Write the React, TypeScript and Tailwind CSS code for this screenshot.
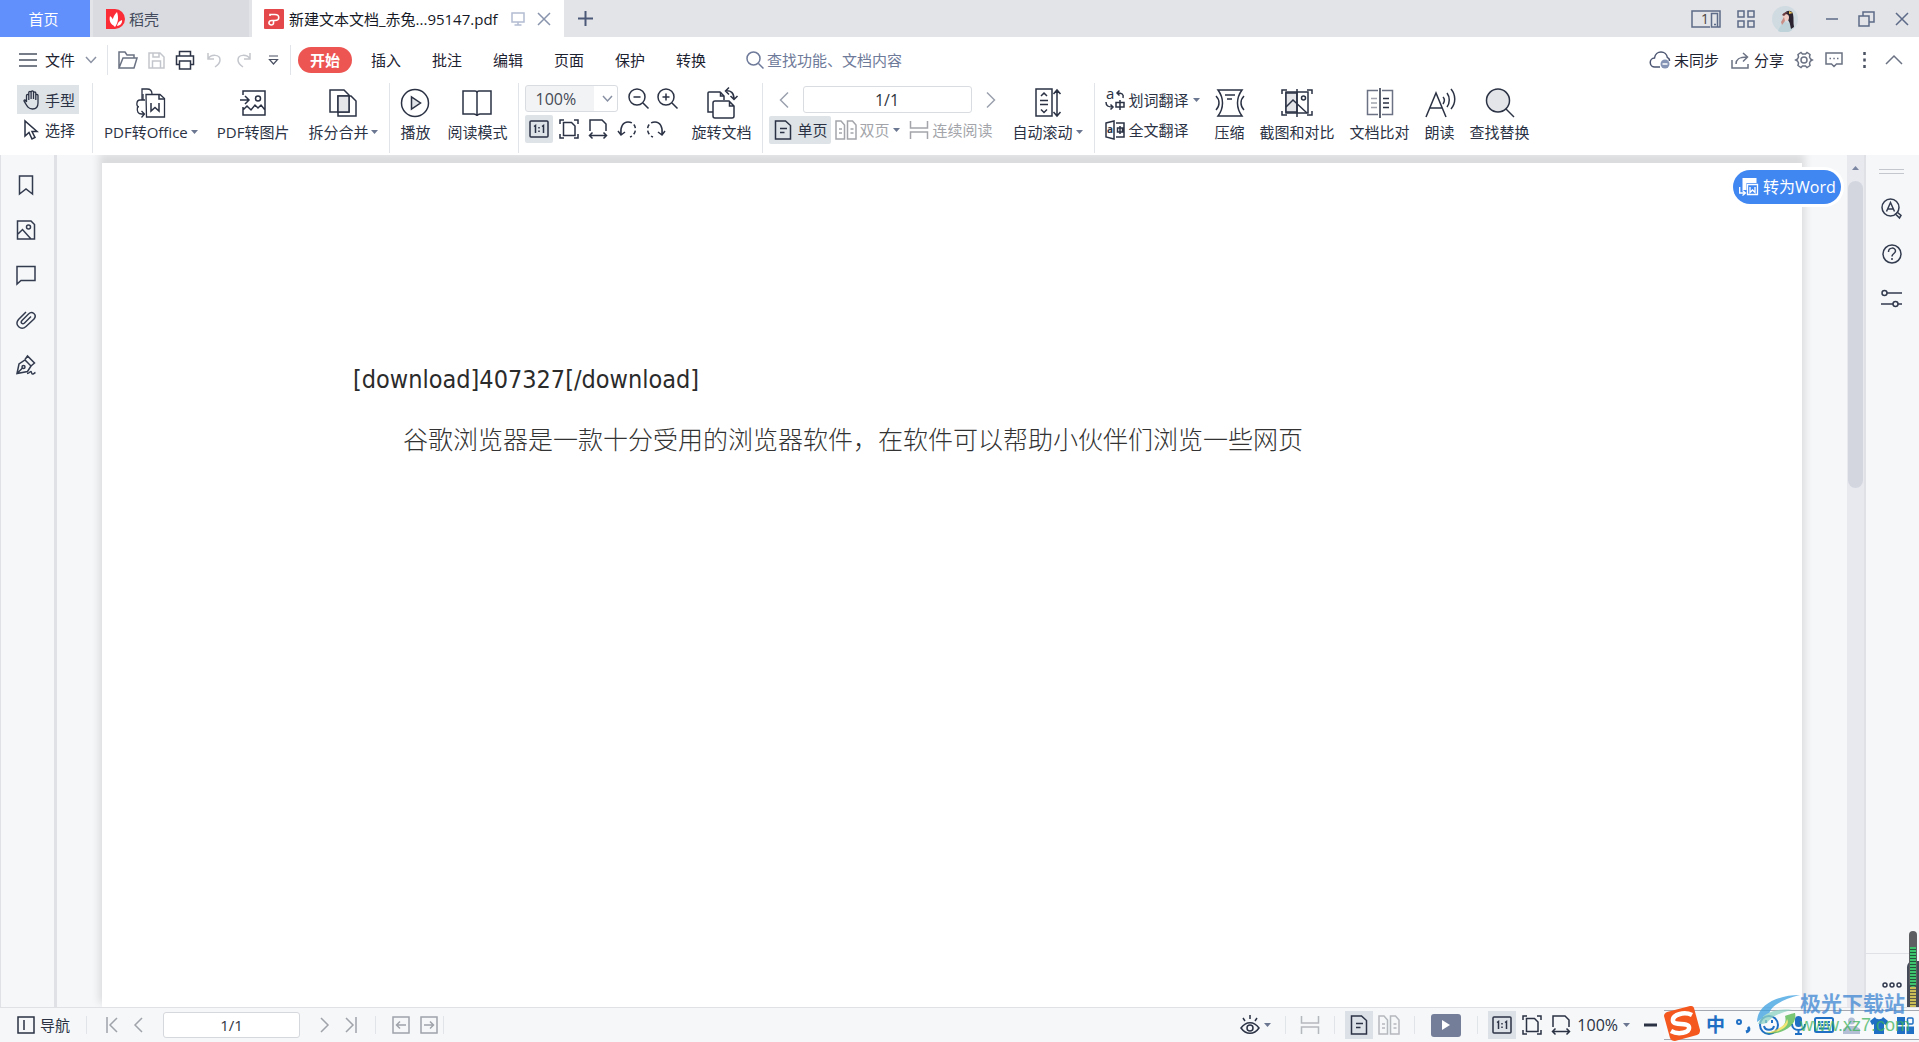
import type { ReactNode } from "react";

type IconProps = {
  w: number;
  h: number;
  children: ReactNode;
  className?: string;
  stroke?: number;
};

function Icon({ w, h, children, className = "", stroke = 1.5 }: IconProps) {
  return (
    <svg
      width={w}
      height={h}
      viewBox={`0 0 ${w} ${h}`}
      fill="none"
      stroke="currentColor"
      strokeWidth={stroke}
      className={`shrink-0 overflow-visible ${className}`}
      aria-hidden="true"
    >
      {children}
    </svg>
  );
}

const Caret = () => (
  <Icon w={7} h={4} className="text-[#6b7690]">
    <path d="M0 0h7L3.500 4z" fill="currentColor" stroke="none" />
  </Icon>
);

const ActualSizeIcon = () => (
  <Icon w={20} h={18}>
    <rect x="1" y="1" width="18" height="16" rx="1" />
    <path d="M5 6.500 6.500 5.500V13M13 6.500l1.500-1V13M10 7v1.500M10 10.500V12" />
  </Icon>
);

const FitPageIcon = () => (
  <Icon w={20} h={20}>
    <path d="M1 5V1h4M15 1h4v4M19 15v4h-4M5 19H1v-4" />
    <path d="M4.500 3.500h8l3.500 3.500v9.500H4.500z" />
  </Icon>
);

const FitWidthIcon = () => (
  <Icon w={20} h={20}>
    <path d="M2 12V1h12l4 4v7M2 16.500h16M4.500 13.500l-3 3 3 3M15.500 13.500l3 3-3 3" />
  </Icon>
);

const SinglePageIcon = () => (
  <Icon w={18} h={20}>
    <path d="M1.500 1h10l5 4.500V19h-15zM6 8.500h7M6 12.500h4.500" />
  </Icon>
);

const DoublePageIcon = () => (
  <Icon w={22} h={20}>
    <path d="M1 1h5l3.500 4v14H1zM12.500 1h5L21 5v14h-8.500zM4 9h3M4 13h3M15.500 9h3M15.500 13h3" />
  </Icon>
);

const ContinuousIcon = () => (
  <Icon w={20} h={20}>
    <path d="M1.500 1v7h17V1M1.500 19v-7h17v7" />
  </Icon>
);

const Chevron = ({ dir }: { dir: "left" | "right" }) => (
  <Icon w={10} h={18}>
    <path d={dir === "left" ? "M9 1.500 1.500 9 9 16.500" : "M1 1.500 8.500 9 1 16.500"} />
  </Icon>
);

const Divider = ({ className = "h-[30px]" }: { className?: string }) => (
  <div className={`w-px shrink-0 bg-[#e1e4e8] ${className}`} />
);

function Tool({ icon, label, caret }: { icon: ReactNode; label: string; caret?: boolean }) {
  return (
    <button className="flex flex-col items-center whitespace-nowrap">
      <span className="flex h-[37px] items-center justify-center pt-[3px]">{icon}</span>
      <span className="flex items-center gap-[3px] leading-6">
        {label}
        {caret && <Caret />}
      </span>
    </button>
  );
}

function TitleBar() {
  return (
    <header className="flex h-[37px] shrink-0 items-stretch bg-[#e2e4e8]">
      <button className="w-[90px] bg-[#618ffc] pr-[3px] text-white">首页</button>
      <button className="ml-[3px] flex w-[156px] items-center gap-1 bg-[#d9dbe0] pl-[13px] text-[#444b5c]">
        <svg width="19" height="20" viewBox="0 0 19 20" aria-hidden="true">
          <path d="M0 0h9a10 10 0 0 1 0 20H0z" fill="#fb2c36" />
          <path
            d="M9 18C5 15 6 8 11 3c2 6 1 11-2 15zM7.500 16.500C4 14.500 3 11 4 7c3 2 4 5 3.500 9.500zM11 17c.500-3 2-5 5-6 .500 3-1.500 5.500-5 6z"
            fill="#fff"
          />
        </svg>
        稻壳
      </button>
      <div className="ml-[3px] flex w-[312px] items-center bg-white pl-3 text-[#151926]">
        <svg width="20" height="20" viewBox="0 0 20 20" aria-hidden="true">
          <rect width="20" height="20" rx="1" fill="#e5484a" />
          <path
            d="M6 7V5.500h5c5 0 5 6 0 6H8c-4 0-4 4.500-.500 4.500 2.500 0 2-2 2-4.500"
            fill="none"
            stroke="#fff"
            strokeWidth="1.600"
          />
        </svg>
        <span className="ml-[5px] flex-1 whitespace-nowrap">新建文本文档_赤兔...95147.pdf</span>
        <Icon w={14} h={14} className="text-[#b3bdd2]">
          <path d="M1 1h12v9H1zM7 10v3M3.500 13h7" />
        </Icon>
        <button aria-label="关闭标签" className="mr-[13px] ml-3">
          <Icon w={14} h={14} className="text-[#8893ac]">
            <path d="M1 1l12 12M13 1 1 13" />
          </Icon>
        </button>
      </div>
      <button aria-label="新建标签" className="ml-[14px]">
        <Icon w={15} h={15} className="text-[#4c5877]" stroke={2}>
          <path d="M7.500 0v15M0 7.500h15" />
        </Icon>
      </button>

      <div className="ml-auto flex items-center pr-[10px] text-[#5d6b88]">
        <button aria-label="窗口列表" className="mr-4">
          <Icon w={30} h={18}>
            <path d="M19 17H1V1h28v16h-2" />
            <path d="M20.500 3.500h6V17h-6zM23 14.500h2" />
            <text x="10" y="14" fontSize="14" fill="#4c4540" stroke="none">1</text>
          </Icon>
        </button>
        <button aria-label="应用" className="mr-[17px]">
          <Icon w={18} h={18}>
            <path d="M1 1h6v6H1zM11 1h6v6h-6zM1 11h6v6H1zM11 11h6v6h-6z" />
          </Icon>
        </button>
        <svg width="26" height="26" viewBox="0 0 26 26" aria-hidden="true">
          <circle cx="13" cy="13" r="13" fill="#cfdbe1" />
          <path d="M6 25c2-5 4-8 7-9l6 2 1 6a13 13 0 0 1-14 1z" fill="#bdd2d9" />
          <path d="M13 7c2-3 7-3 8 1 1 4 0 9 1 13l-3 2c-1-5-1-6-3-9-2 0-4-2-3-7z" fill="#2b2430" />
          <path d="M11 9c2-2 6-1 6 2s-1 4-3 4-4-3-3-6z" fill="#f0cfc7" />
          <path d="M9 16l3-5 1 4-3 4z" fill="#c98f86" />
          <path d="M10 9c2-3 4-3 6-3l-4 4z" fill="#6b3f42" />
          <path d="M17 5l4 2-4 1z" fill="#e5bf58" />
        </svg>
        <Divider className="mx-3 h-6 bg-[#c9ccd3]" />
        <button aria-label="最小化" className="ml-[3px]">
          <Icon w={12} h={14}>
            <path d="M0 7h12" />
          </Icon>
        </button>
        <button aria-label="还原" className="ml-5">
          <Icon w={17} h={16}>
            <path d="M1 5h10v10H1zM5 5V1h11v10h-5" />
          </Icon>
        </button>
        <button aria-label="关闭" className="ml-5">
          <Icon w={14} h={14}>
            <path d="M1 1l12 12M13 1 1 13" />
          </Icon>
        </button>
      </div>
    </header>
  );
}

const menus = ["插入", "批注", "编辑", "页面", "保护", "转换"];

function MenuBar() {
  return (
    <nav className="flex h-[46px] shrink-0 items-center bg-white pr-4 pl-[19px] text-[#1d2231]">
      <button className="flex items-center">
        <Icon w={18} h={14} className="mr-2 text-[#4a5162]">
          <path d="M0 1h18M0 7h18M0 13h18" />
        </Icon>
        文件
        <Icon w={12} h={8} className="mx-[10px] text-[#8b92a3]">
          <path d="M1 1l5 5.500L11 1" />
        </Icon>
      </button>
      <Divider />
      <div className="flex items-center gap-[10px] px-[10px] text-[#6b7283]">
        <button aria-label="打开">
          <Icon w={20} h={18}>
            <path d="M1 17V1h6l2 3h7v3M1 17 5 7h14l-3 10z" />
          </Icon>
        </button>
        <button aria-label="保存" className="text-[#c3c6cc]">
          <Icon w={17} h={17}>
            <path d="M1 1h11l4 4v11H1zM5 1v4h6V1M4.500 16V9h8v7" />
          </Icon>
        </button>
        <button aria-label="打印" className="text-[#2c3446]">
          <Icon w={20} h={20}>
            <path d="M4.500 6V1.500h11V6M4.500 14.500H1.500V6h17v8.500h-3M4.500 11h11v8h-11z" />
          </Icon>
        </button>
        <button aria-label="撤销" className="text-[#c3c6cc]">
          <Icon w={18} h={16}>
            <path d="M3 1v6h6M3 7c3-5 12-5 12 1 0 3-2 5-5 7" />
          </Icon>
        </button>
        <button aria-label="恢复" className="text-[#c3c6cc]">
          <Icon w={20} h={16}>
            <path d="M17 1v6h-6M17 7C14 2 5 2 5 8c0 3 2 5 5 7" />
          </Icon>
        </button>
        <button aria-label="自定义快速访问工具栏" className="pr-px pl-[5px] text-[#4a5162]">
          <Icon w={11} h={10}>
            <path d="M1 1h9M1.500 4.500h8L5.500 9z" strokeWidth="1.200" />
          </Icon>
        </button>
      </div>
      <Divider />
      <button className="ml-[7px] h-[26px] w-[54px] rounded-full bg-[#ec5552] font-bold text-white">
        开始
      </button>
      <div className="ml-[19px] flex gap-[31px]">
        {menus.map((menu) => (
          <button key={menu}>{menu}</button>
        ))}
      </div>
      <label className="ml-10 flex items-center gap-[3px] text-[#6e7a99]">
        <Icon w={18} h={18}>
          <circle cx="7.500" cy="7.500" r="6.500" />
          <path d="M12.500 12.500 17.500 17.500" />
        </Icon>
        <input
          aria-label="搜索"
          placeholder="查找功能、文档内容"
          className="w-40 outline-none placeholder:text-[#6e7a99]"
        />
      </label>
      <div className="ml-auto flex items-center text-[#3d4659]">
        <button className="flex items-center gap-1 text-[#1d2231]">
          <Icon w={20} h={18} className="text-[#4a5470]">
            <path d="M10 16H5a4.500 4.500 0 0 1-.500-9C5 3 8 1 11 1s6 2 6.500 6" />
            <path d="M17.500 7c1.500 0 2 1.500 2 3" />
            <circle cx="15" cy="13" r="4.500" fill="#8593b5" stroke="none" />
            <path d="M12.500 13h5" stroke="#fff" />
          </Icon>
          未同步
        </button>
        <button className="ml-3 flex items-center gap-[5px] text-[#1d2231]">
          <Icon w={18} h={17} className="text-[#6b7283]">
            <path d="M1 8v8h16v-4M5 12c0-5 3-7 11-7M12 1l4.500 4-4.500 4.500" />
          </Icon>
          分享
        </button>
        <button aria-label="设置" className="ml-[11px]">
          <Icon w={18} h={18} className="text-[#6b7283]">
            <path d="M6 1.500 7.500 3h3L12 1.500l3 2-.500 2.500 1 2L17.300 9l-1.800 1-1 2 .500 2.500-3 2-1.500-1.500h-3L6 16.500l-3-2 .500-2.500-1-2L.700 9l1.800-1 1-2L3 3.500z" />
            <circle cx="9" cy="9" r="3" />
          </Icon>
        </button>
        <button aria-label="反馈" className="ml-3">
          <Icon w={18} h={16} className="text-[#6b7283]">
            <path d="M1 1h16v11h-5.500L9 14.500 6.500 12H1zM4.500 6.500h1.500M8.300 6.500h1.500M12 6.500h1.500" />
          </Icon>
        </button>
        <button aria-label="更多" className="ml-5">
          <Icon w={3} h={16}>
            <path d="M1.500 0v3M1.500 6.500v3M1.500 13v3" stroke="#4a5162" strokeWidth="2.500" />
          </Icon>
        </button>
        <button aria-label="收起功能区" className="ml-[19px]">
          <Icon w={18} h={10} className="text-[#6b7283]">
            <path d="M1 9 9 1l8 8" />
          </Icon>
        </button>
      </div>
    </nav>
  );
}

function Ribbon() {
  return (
    <section className="relative z-10 flex h-[72px] shrink-0 bg-white pl-[17px] text-[#2b3244]">
      <div className="flex w-[75px] flex-col items-start pt-[2px]">
        <button className="flex h-[29px] w-[62px] items-center gap-[6px] bg-[#dee3e8] pl-[6px]">
          <Icon w={16} h={20} stroke={1.3}>
            <path d="M3.500 12V5.500c0-1.500 2.300-1.500 2.300 0V10 2.500c0-1.500 2.300-1.500 2.300 0V9 2c0-1.500 2.400-1.500 2.400 0v7V3c0-1.500 2.300-1.500 2.300 0v7V5.500c0-1.500 2.200-1.500 2.200 0V13c0 4-2 6-5.500 6-4 0-5-2-8.500-8 0-1.500 1.500-1.500 2.500 1z" />
          </Icon>
          手型
        </button>
        <button className="flex h-[31px] w-[62px] items-center gap-[6px] pl-[6px]">
          <Icon w={16} h={20}>
            <path d="M2 1v15l4-3.500 3 6.500 3-1.500-3-6h5z" />
          </Icon>
          选择
        </button>
      </div>
      <Divider className="h-[70px]" />

      <div className="flex gap-[19px] px-[11px]">
        <Tool
          label="PDF转Office"
          caret
          icon={
            <Icon w={30} h={30}>
              <path d="M6 12V1h5c4 0 5 2 5 5M9 12H4c-4 0-4 7-1 7M10 6.500h14l4.500 4V29h-18z" strokeWidth="1.300" />
              <path d="M7 6v6M1.500 19c-1 5 1 7 4 7h3M5.500 23l3 3-3 3.500" strokeWidth="1.300" />
              <path d="M15 15v8l4-3.500 4 3.500v-8M23 7v4h5" />
            </Icon>
          }
        />
        <Tool
          label="PDF转图片"
          icon={
            <Icon w={26} h={28}>
              <path d="M3 6V2h22v24H3v-8M0 11h8M5 7l4 4-4 4M3 21l4-4 4 4 4-5 3 3 3-3 4 5" />
              <circle cx="18" cy="9.500" r="2.500" />
            </Icon>
          }
        />
        <Tool
          label="拆分合并"
          caret
          icon={
            <Icon w={30} h={30}>
              <path d="M2 2h14l5 5v17H2z" />
              <path d="M10 8h13l5 5v15H10z" />
              <path d="M10 8h11v16H10z" fill="#e3e5e9" />
            </Icon>
          }
        />
      </div>
      <Divider className="h-[70px]" />

      <div className="flex gap-[17px] px-[10px]">
        <Tool
          label="播放"
          icon={
            <Icon w={30} h={30}>
              <circle cx="15" cy="15" r="13.500" />
              <path d="M11.500 9v12l9-6z" fill="#dfe2e6" />
            </Icon>
          }
        />
        <Tool
          label="阅读模式"
          icon={
            <Icon w={30} h={28}>
              <path d="M15 4c0-1 1-2 2-2h12v23H18c-1 0-3 1-3 2 0-1-2-2-3-2H1V2h12c1 0 2 1 2 2zM15 4v22" />
            </Icon>
          }
        />
      </div>
      <Divider className="h-[70px]" />

      <div className="flex gap-[6px] px-[6px]">
        <div className="flex flex-col gap-[3px] pt-[2px]">
          <div className="flex items-center">
            <div className="relative">
              <select
                aria-label="缩放比例"
                className="block h-[27px] w-[93px] appearance-none rounded-[3px] border border-[#d9dce1] bg-white bg-linear-to-r from-[#f2f3f5] from-75% to-white to-75% pl-[10px] text-[16px] text-[#454a55]"
              >
                <option>100%</option>
              </select>
              <Icon w={11} h={8} className="pointer-events-none absolute top-[10px] right-[5px] text-[#8790a3]">
                <path d="M1 1l4.500 5L10 1" />
              </Icon>
            </div>
            <button aria-label="缩小" className="ml-[10px]">
              <Icon w={21} h={21}>
                <circle cx="9" cy="9" r="8" />
                <path d="M15 15l5.500 5.500M5.500 9h7" />
              </Icon>
            </button>
            <button aria-label="放大" className="ml-2">
              <Icon w={21} h={21}>
                <circle cx="9" cy="9" r="8" />
                <path d="M15 15l5.500 5.500M5.500 9h7M9 5.500v7" />
              </Icon>
            </button>
          </div>
          <div className="flex items-center gap-[9px]">
            <button aria-label="实际大小" className="-mr-[3px] flex h-7 w-7 items-center justify-center rounded-xs bg-[#dee3e8]">
              <ActualSizeIcon />
            </button>
            <button aria-label="适合页面">
              <FitPageIcon />
            </button>
            <button aria-label="适合宽度">
              <FitWidthIcon />
            </button>
            <button aria-label="向左旋转">
              <Icon w={20} h={18}>
                <path d="M4 14C3 7 6 2 11 2M1 11l3 4 4-3" />
                <path d="M11 2c9 0 10 12 2 15" strokeDasharray="4 2.500" />
              </Icon>
            </button>
            <button aria-label="向右旋转">
              <Icon w={20} h={18}>
                <path d="M16 14c1-7-2-12-7-12M19 11l-3 4-4-3" />
                <path d="M9 2C0 2-1 14 7 17" strokeDasharray="4 2.500" />
              </Icon>
            </button>
          </div>
        </div>
        <div className="pr-1 pl-2">
          <Tool
            label="旋转文档"
            icon={
              <Icon w={30} h={32}>
                <path d="M6 25H1V6c0-1 0-1 1-1h11l4 4v4" />
                <path d="M6 16c0-2 1-2 2-2h14l5 5v10c0 2-1 2-2 2H8c-1 0-2 0-2-2zM22.500 14v5H27M13.500 5v4H17" />
                <path d="M18 4c6-1 9 2 9 8M22 .500 18.500 4 22 7.500M23.500 9l3.500 3.500L30.500 9" />
              </Icon>
            }
          />
        </div>
      </div>
      <Divider className="h-[70px]" />

      <div className="flex flex-col gap-[3px] px-[6px] pt-[3px]">
        <div className="flex h-[27px] items-center gap-[14px] pl-[10px] text-[#9ba1ae]">
          <button aria-label="上一页">
            <Chevron dir="left" />
          </button>
          <input
            aria-label="页码"
            defaultValue="1/1"
            className="h-[27px] w-[169px] rounded-[3px] border border-[#d9dce1] text-center text-[16px] text-[#2f3440]"
          />
          <button aria-label="下一页">
            <Chevron dir="right" />
          </button>
        </div>
        <div className="flex items-center">
          <button className="flex h-7 w-[62px] items-center gap-[6px] rounded-xs bg-[#dee3e8] pl-[5px]">
            <SinglePageIcon />
            单页
          </button>
          <button className="ml-1 flex items-center gap-[3px] text-[#a3a5aa]">
            <DoublePageIcon />
            双页
            <Caret />
          </button>
          <button className="ml-[9px] flex items-center gap-1 text-[#a3a5aa]">
            <ContinuousIcon />
            连续阅读
          </button>
        </div>
      </div>
      <div className="flex px-[11px]">
        <Tool
          label="自动滚动"
          caret
          icon={
            <Icon w={26} h={30}>
              <path d="M1 1h16v27H1zM6 8l3-3 3 3M5 12.500h8M5 16.500h8M6 21.500l3 3 3-3M22 3v24M18.500 6 22 2l3.500 4M18.500 24l3.500 4 3.500-4" />
            </Icon>
          }
        />
      </div>
      <Divider className="h-[70px]" />

      <div className="flex gap-[15px] pl-[10px]">
        <div className="flex flex-col items-start pt-[2px]">
          <button className="flex h-[29px] items-center gap-1">
            <Icon w={20} h={20}>
              <text x="1" y="9" fontSize="15" fill="currentColor" stroke="none">a</text>
              <path d="M18 8c1-4-1-5-6-5M14.500.500 12 3l2.500 2.500M1 12c0 4 2 5 7 5M5.500 14.500 8 17l-2.500 2.500M11 12.500h8v4.500h-8zM15 10v10" />
            </Icon>
            划词翻译
            <Caret />
          </button>
          <button className="flex h-[31px] items-center gap-1">
            <Icon w={20} h={20}>
              <path d="M1 3l8-2v18l-8-2zM11 3h8v14h-8M12.500 8h5v4h-5zM15 6v8" />
              <text x="2" y="13" fontSize="10" fontWeight="700" fill="currentColor" stroke="none">a</text>
            </Icon>
            全文翻译
          </button>
        </div>
        <Tool
          label="压缩"
          icon={
            <Icon w={30} h={28}>
              <path d="M3 1h24c-6 8-6 18 0 26H3c6-8 6-18 0-26zM1 7c4 4 4 10 0 14M29 7c-4 4-4 10 0 14M10 6h10M12 10h5" />
            </Icon>
          }
        />
        <Tool
          label="截图和对比"
          icon={
            <Icon w={32} h={30}>
              <path d="M5 4h22v21H5z" />
              <path d="M5 5h11v19H5z" fill="#e3e5e9" />
              <path d="M1 6V2h5M26 2h5v4M31 23v4h-5M6 27H1v-4M16 1v28M5 19l7-7 14 13" />
              <circle cx="22.500" cy="10" r="2" />
            </Icon>
          }
        />
        <Tool
          label="文档比对"
          icon={
            <Icon w={28} h={32}>
              <path d="M12 3.500H1.500v24H12M16 3.500h10.500v24H16" stroke="#6b7283" />
              <path d="M14 1v30M17 11.500h6M17 16h6M17 20.500h6" />
              <path d="M5 11.500h6M5 16h6M5 20.500h6" stroke="#a3a5b0" />
            </Icon>
          }
        />
        <Tool
          label="朗读"
          icon={
            <Icon w={30} h={30}>
              <path d="M1 29 11 5l10 24M5 20h12M18 9c2 2 2 4 0 7M22 5c3 4 3 10 0 14M26 1c5 6 5 14 0 20" />
            </Icon>
          }
        />
        <Tool
          label="查找替换"
          icon={
            <Icon w={30} h={30}>
              <circle cx="13" cy="12.500" r="11.500" fill="#e3e5e9" />
              <path d="M21 21l8 8" />
            </Icon>
          }
        />
      </div>
    </section>
  );
}

function LeftPanel() {
  return (
    <aside className="flex w-[57px] shrink-0 flex-col items-center gap-[25px] border-r-[3px] border-l border-[#dfe1e7] bg-[#f5f7f9] pt-5 pr-[3px] text-[#333b4f]">
      <button aria-label="书签">
        <Icon w={20} h={20}>
          <path d="M3.500 1h13v18L10 14l-6.500 5z" />
        </Icon>
      </button>
      <button aria-label="缩略图">
        <Icon w={20} h={20}>
          <path d="M1.500 1H15l3.500 3.500V19h-17zM2 14l4.500-4.500L15 19" />
          <circle cx="12.500" cy="7" r="2" />
        </Icon>
      </button>
      <button aria-label="批注">
        <Icon w={20} h={20}>
          <path d="M1 1.500h18v14H5L1 19z" />
        </Icon>
      </button>
      <button aria-label="附件">
        <Icon w={20} h={20}>
          <path d="M15 6.500 8.500 13c-2 2-4.500-.500-2.500-2.500L12.500 4c3.500-3.500 9 .500 5.500 5L10 16.500C5 21-2 15 2.500 9.500L10 2" />
        </Icon>
      </button>
      <button aria-label="签名">
        <Icon w={20} h={20}>
          <path d="M1 18.500 3 9l6-4 6 6-3.500 5.500zM9 4.500 11.500 1l7 7-3.500 3M1 18.500l5.500-5.500M11 18.500c3 0 4-4 4.500-1s2 1 4 0" />
          <circle cx="7.500" cy="12" r="1.500" />
        </Icon>
      </button>
    </aside>
  );
}

function RightPanel() {
  return (
    <aside className="flex w-[55px] shrink-0 flex-col items-center border-l-2 border-[#dfe1e7] bg-[#f5f7f9] pt-[14px] pr-[2px] text-[#333b4f]">
      <div className="h-[5px] w-[25px] border-y border-[#c4c7cd]" />
      <div className="mt-6 flex flex-1 flex-col items-center gap-[25px]">
        <button aria-label="查找">
          <Icon w={21} h={21}>
            <circle cx="9.500" cy="9.500" r="8.500" />
            <path d="M5.500 13.500 9.500 4.500l4 9M7 11h5" />
            <path d="M14.500 16l2-1.500 3.500 3-1.500 2.500z" fill="#f5f7f9" />
          </Icon>
        </button>
        <button aria-label="帮助">
          <Icon w={20} h={20}>
            <circle cx="10" cy="10" r="9" />
            <path d="M6.500 8c0-5 7-5 7-1 0 2.500-3.500 2.500-3.500 5.500M10 14v2" />
          </Icon>
        </button>
        <button aria-label="属性设置">
          <Icon w={21} h={20}>
            <circle cx="3.500" cy="4" r="2.500" />
            <circle cx="14.500" cy="15" r="2.500" />
            <path d="M6 4h15M0 15h12M17 15h4" />
          </Icon>
        </button>
      </div>
      <div className="flex h-[54px] w-full justify-center border-t border-[#dfe1e7] pt-7">
        <Icon w={20} h={6}>
          <circle cx="3" cy="3" r="2" />
          <circle cx="10" cy="3" r="2" />
          <circle cx="17" cy="3" r="2" />
        </Icon>
      </div>
    </aside>
  );
}

function Workspace() {
  return (
    <main className="relative flex min-h-0 flex-1 bg-[#f5f7f9]">
      <LeftPanel />
      <div className="flex min-w-0 flex-1 overflow-hidden px-[45px] pt-2">
        <article className="flex-1 bg-white pt-[200px] pl-[251px] shadow-[0_-7px_8px_3px_rgba(0,0,0,0.11)]">
          <p className="font-['DejaVu_Sans_Condensed','Noto_Sans',sans-serif] text-[25px] leading-[34px] text-[#2b2b2b]">
            [download]407327[/download]
          </p>
          <p className="mt-[25px] pl-[50px] text-[25px] leading-[34px] font-light text-[#333]">
            谷歌浏览器是一款十分受用的浏览器软件，在软件可以帮助小伙伴们浏览一些网页
          </p>
        </article>
      </div>
      <div className="flex w-[17px] shrink-0 flex-col items-center bg-[#e8e9ef]">
        <Icon w={7} h={4} className="my-[11px] text-[#7b86a3]">
          <path d="M0 4h7L3.500 0z" fill="currentColor" stroke="none" />
        </Icon>
        <div className="h-[36%] w-[15px] rounded-full bg-[#d3d6df]" />
      </div>
      <RightPanel />

      <button className="absolute top-[15px] right-[78px] flex h-[34px] w-[108px] items-center gap-[5px] rounded-full bg-[#4187f2] pl-[6px] text-[16px] whitespace-nowrap text-white shadow-[0_0_0_3px_#fff]">
        <Icon w={19} h={18}>
          <path d="M3.500 0h14v5h-10v7h-4z" fill="#fff" stroke="none" />
          <path d="M8.500 6.500h10v10h-10z" strokeWidth="1.300" />
          <path d="M11 9v5.500l2.500-2.500 2.500 2.500V9M.700 9v6h5.500M3.500 12.500l3 2.500-3 2.500" strokeWidth="1.300" />
        </Icon>
        转为Word
      </button>
      <LevelMeter />
    </main>
  );
}

function LevelMeter() {
  return (
    <div className="absolute right-0 bottom-0 flex h-[76px] w-3 flex-col items-center">
      <div className="absolute bottom-0 h-[46px] w-3 rounded-tl-md bg-[#464b59]" />
      <div className="relative z-10 flex h-14 w-2 flex-col rounded-full bg-[#5c5e62] px-px pt-4">
        <div className="h-10 rounded-b-full bg-[repeating-linear-gradient(#3ec46d_0_2px,#23533a_2px_3px)]" />
      </div>
      <div className="relative h-5 w-[6px] bg-[repeating-linear-gradient(#c9bd58_0_2px,#5d5c45_2px_3px)]" />
    </div>
  );
}

function StatusBar() {
  return (
    <footer className="flex h-[35px] shrink-0 items-center border-t border-[#dfe1e5] bg-[#f5f7f9] pl-[17px] text-[#2b3244]">
      <button className="flex items-center gap-[5px]">
        <Icon w={18} h={18}>
          <path d="M1 1h16v16H1zM7 4v10" />
        </Icon>
        导航
      </button>
      <Divider className="mx-4 h-[18px]" />
      <div className="flex items-center text-[#a0a3aa]">
        <button aria-label="第一页" className="ml-[3px]">
          <Icon w={12} h={16}>
            <path d="M1 0v16M11 1 4 8l7 7" />
          </Icon>
        </button>
        <button aria-label="上一页" className="ml-4">
          <Icon w={9} h={16}>
            <path d="M8 1 1 8l7 7" />
          </Icon>
        </button>
        <input
          aria-label="当前页码"
          defaultValue="1/1"
          className="mx-5 h-[26px] w-[137px] rounded-[3px] border border-[#d5d8dd] bg-white text-center text-[#2f3440]"
        />
        <button aria-label="下一页">
          <Icon w={9} h={16}>
            <path d="M1 1l7 7-7 7" />
          </Icon>
        </button>
        <button aria-label="最后一页" className="ml-4">
          <Icon w={12} h={16}>
            <path d="M11 0v16M1 1l7 7-7 7" />
          </Icon>
        </button>
        <Divider className="ml-[18px] h-[18px]" />
        <button aria-label="后退" className="ml-4">
          <Icon w={18} h={18}>
            <path d="M1 1h16v16H1zM4 9h10M8 5.500 4.500 9 8 12.500" />
          </Icon>
        </button>
        <button aria-label="前进" className="ml-[10px]">
          <Icon w={18} h={18}>
            <path d="M1 1h16v16H1zM4 9h10M10 5.500l3.500 3.500-3.500 3.500" />
          </Icon>
        </button>
        <Divider className="ml-[5px] h-[18px]" />
      </div>

      <div className="ml-auto flex items-center">
        <button aria-label="护眼模式" className="flex items-center gap-1">
          <Icon w={20} h={20}>
            <path d="M1 13c5-7 13-7 18 0-5 7-13 7-18 0zM10 0v4M3 3l2 3M17 3l-2 3" />
            <circle cx="10" cy="13" r="3" />
          </Icon>
          <Caret />
        </button>
        <Divider className="mx-[14px] h-[18px]" />
        <button aria-label="连续阅读" className="text-[#b5b8bd]">
          <ContinuousIcon />
        </button>
        <Divider className="mr-[10px] ml-[14px] h-[18px]" />
        <button aria-label="单页" className="flex h-7 w-7 items-center justify-center bg-[#dce0e7]">
          <SinglePageIcon />
        </button>
        <button aria-label="双页" className="ml-[5px] text-[#b5b8bd]">
          <DoublePageIcon />
        </button>
        <Divider className="mr-4 ml-[14px] h-[18px]" />
        <button aria-label="播放" className="flex h-[23px] w-[30px] items-center justify-center rounded-[3px] bg-[#747e98]">
          <Icon w={8} h={10}>
            <path d="M0 0v10l8-5z" fill="#fff" stroke="none" />
          </Icon>
        </button>
        <Divider className="mr-[10px] ml-4 h-[18px]" />
        <button aria-label="实际大小" className="flex h-7 w-7 items-center justify-center bg-[#dce0e7]">
          <ActualSizeIcon />
        </button>
        <button aria-label="适合页面" className="ml-[6px]">
          <FitPageIcon />
        </button>
        <button aria-label="适合宽度" className="ml-[9px]">
          <FitWidthIcon />
        </button>
        <button className="ml-[6px] flex items-center gap-[5px] text-[16px]">
          100%
          <Caret />
        </button>
        <button aria-label="缩小" className="mr-[7px] ml-[14px]">
          <Icon w={13} h={4} stroke={3}>
            <path d="M0 2h13" />
          </Icon>
        </button>
        <InputMethodBar />
      </div>
    </footer>
  );
}

function InputMethodBar() {
  return (
    <div className="relative flex h-[30px] w-[255px] items-center border-y border-[#a4a8b0] bg-[#f7f9fb] pl-[42px] text-[#1f6fc4]">
      <svg width="36" height="35" viewBox="0 0 36 35" className="absolute top-[-5px] left-0" aria-hidden="true">
        <path d="M3 6 26 0c2 0 3 0 4 2l6 22c0 3-1 4-3 5l-22 6c-3 0-4-1-5-3L0 10c0-2 1-3 3-4z" fill="#f4581f" />
        <path
          d="M28 9C20 5 8 9 9 15c1 5 15 1 16 6 1 6-11 8-18 4"
          fill="none"
          stroke="#fff"
          strokeWidth="4.500"
        />
      </svg>
      <span className="w-[30px] text-[19px] font-bold">中</span>
      <Icon w={15} h={16} stroke={2}>
        <circle cx="3" cy="5" r="2" />
        <path d="M12 10c2 2 1 4-2 5" strokeWidth="3" />
      </Icon>
      <Icon w={20} h={20} stroke={2} className="ml-2">
        <circle cx="10" cy="10" r="9" />
        <path d="M5 11c1 5 9 5 10 0M7 5v3M13 5v3" />
      </Icon>
      <Icon w={15} h={19} stroke={2} className="ml-3">
        <rect x="4" y="0" width="7" height="11" rx="3.500" fill="currentColor" stroke="none" />
        <path d="M1 8c0 8 13 8 13 0M7.500 14v4M4 18h7" />
      </Icon>
      <Icon w={20} h={16} stroke={2} className="ml-2">
        <rect x="1" y="1" width="18" height="14" rx="1.500" />
        <path d="M4 5h12M4 8h12" strokeDasharray="2 1.300" />
        <path d="M5 11.500h10" />
      </Icon>
      <Icon w={17} h={17} className="ml-[9px] text-[#b4bfd6]">
        <circle cx="8.500" cy="4" r="3.500" fill="currentColor" stroke="none" />
        <path d="M0 17v-5l4-3h9l4 3v5z" fill="currentColor" stroke="none" />
      </Icon>
      <Icon w={18} h={17} className="ml-[10px]">
        <path d="M5 0c1 3 7 3 8 0l5 4-2 4-2-1v10H4V7L2 8 0 4z" fill="currentColor" stroke="none" />
      </Icon>
      <Icon w={17} h={17} className="ml-[9px]">
        <path d="M0 0h8v8H0zM0 9.500h8V17H0zM9.500 9.500H17V17H9.500z" fill="currentColor" stroke="none" />
        <rect x="10.500" y="1" width="5.500" height="6" rx="1" />
      </Icon>

      {/* download site mark floating above the bar */}
      <div className="pointer-events-none absolute right-[9px] bottom-[4px] flex items-end opacity-75">
        <svg width="45" height="40" viewBox="0 0 45 40" aria-hidden="true">
          <path d="M2 27C2 10 22 0 45 0 24 5 12 14 15 21c-5 1-9 3-13 6z" fill="#3a9fe0" />
          <path d="M3 29c5-12 20-16 34-14C24 18 16 22 12 28c-3 1-7 1-9 1z" fill="#8fd3c4" />
          <path d="M9 38c14-1 24-7 21-17 5-2 9-3 10-3 3 12-12 23-31 20z" fill="#4fb648" />
          <path d="M12 38c10-3 19-7 20-14 4 6-6 14-20 14z" fill="#f3e04a" />
        </svg>
        <div className="flex flex-col whitespace-nowrap">
          <span className="text-[21px] leading-6 font-bold text-[#3d86d3]">极光下载站</span>
          <span className="font-['Liberation_Sans',sans-serif] text-[18px] leading-5 text-[#3fb45c]">
            www.xz7.com
          </span>
        </div>
      </div>
    </div>
  );
}

export default function App() {
  return (
    <div className="flex h-screen flex-col overflow-hidden bg-white font-['Open_Sans','Noto_Sans_CJK_SC',sans-serif] text-[15px] leading-5">
      <TitleBar />
      <MenuBar />
      <Ribbon />
      <Workspace />
      <StatusBar />
    </div>
  );
}
